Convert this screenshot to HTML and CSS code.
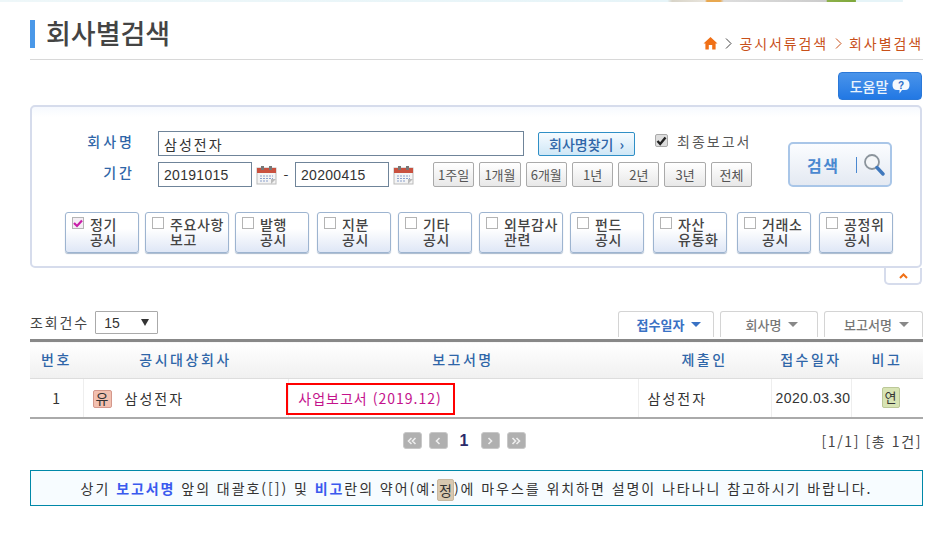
FILE: index.html
```html
<!DOCTYPE html>
<html lang="ko">
<head>
    <meta charset="UTF-8">
    <meta name="viewport" content="width=device-width, initial-scale=1.0">
    <title>회사별검색</title>
    <link rel="stylesheet" href="styles.css">
</head>
<body>
    <div class="top-strip"></div>

    <div class="wrap">
        <div class="title-row">
            <h1 class="page-title">회사별검색</h1>
            <div class="crumbs">
                <svg class="home-icon" width="15" height="14" viewBox="0 0 15 14"><path d="M7.5 1 L14.5 7.5 L12.6 7.5 L12.6 13.5 L9.2 13.5 L9.2 9 L5.8 9 L5.8 13.5 L2.4 13.5 L2.4 7.5 L0.5 7.5 Z" fill="#f07016"/></svg>
                <svg class="crumb-sep" width="7" height="11" viewBox="0 0 7 11"><path d="M1 0.5 L6 5.5 L1 10.5" fill="none" stroke="#444" stroke-width="1"/></svg>
                <span>공시서류검색</span>
                <svg class="crumb-sep" width="7" height="11" viewBox="0 0 7 11"><path d="M1 0.5 L6 5.5 L1 10.5" fill="none" stroke="#c8501a" stroke-width="1"/></svg>
                <span>회사별검색</span>
            </div>
        </div>

        <div class="help-row">
            <button class="help-btn">도움말
                <svg width="18" height="15" viewBox="0 0 18 15"><path d="M5 0.5 H13 Q17.5 0.5 17.5 6 Q17.5 11 13 11 H10 L7.5 14.5 L7.5 11 H5 Q0.5 11 0.5 6 Q0.5 0.5 5 0.5 Z" fill="#f4f8fd"/><text x="9" y="9.5" text-anchor="middle" class="help-mark">?</text></svg>
            </button>
        </div>

        <div class="search-box">
            <div class="search-top">
                <div class="search-fields">
                    <div class="field-row">
                        <label class="field-label">회사명</label>
                        <input class="text-input company-input" type="text" value="삼성전자">
                        <button class="find-btn">회사명찾기 <span class="find-arrow">›</span></button>
                        <label class="final-check"><span class="check-gray"><svg width="11" height="10" viewBox="0 0 11 10"><path d="M1.5 5 L4.2 8 L9.5 1.5" fill="none" stroke="#222" stroke-width="2.4"/></svg></span>최종보고서</label>
                    </div>
                    <div class="field-row date-row">
                        <label class="field-label">기간</label>
                        <input class="text-input date-input" type="text" value="20191015">
                        <svg class="cal-icon" width="21" height="20" viewBox="0 0 21 20"><rect x="1" y="3" width="19" height="16" fill="#f4f4f4" stroke="#bbb"/><rect x="1" y="3" width="19" height="5" fill="#c9513f"/><rect x="5" y="1" width="3" height="4" fill="#777"/><rect x="13" y="1" width="3" height="4" fill="#777"/><path d="M4 11 H17 M4 13.5 H17 M4 16 H13" stroke="#8aa0cc" stroke-width="1" stroke-dasharray="2 1"/><path d="M20 14 L15 19 L15 14 Z" fill="#bbb"/></svg>
                        <span class="date-dash">-</span>
                        <input class="text-input date-input" type="text" value="20200415">
                        <svg class="cal-icon" width="21" height="20" viewBox="0 0 21 20"><rect x="1" y="3" width="19" height="16" fill="#f4f4f4" stroke="#bbb"/><rect x="1" y="3" width="19" height="5" fill="#c9513f"/><rect x="5" y="1" width="3" height="4" fill="#777"/><rect x="13" y="1" width="3" height="4" fill="#777"/><path d="M4 11 H17 M4 13.5 H17 M4 16 H13" stroke="#8aa0cc" stroke-width="1" stroke-dasharray="2 1"/><path d="M20 14 L15 19 L15 14 Z" fill="#bbb"/></svg>
                        <div class="period-btns">
                            <button class="period-btn">1주일</button>
                            <button class="period-btn">1개월</button>
                            <button class="period-btn">6개월</button>
                            <button class="period-btn">1년</button>
                            <button class="period-btn">2년</button>
                            <button class="period-btn">3년</button>
                            <button class="period-btn">전체</button>
                        </div>
                    </div>
                </div>
                <button class="search-btn">
                    <span class="search-text">검색</span>
                    <span class="search-bar"></span>
                    <svg width="22" height="24" viewBox="0 0 22 24"><circle cx="9" cy="9" r="7" fill="#f4f6f8" stroke="#8b949c" stroke-width="1.8"/><path d="M14 14.5 L20 21" stroke="#3f78bd" stroke-width="3.4" stroke-linecap="round"/></svg>
                </button>
            </div>

            <div class="type-grid">
                <label class="type-btn"><span class="type-check on"><svg width="10" height="9" viewBox="0 0 10 9"><path d="M1 4 L4 7 L9 1.5" fill="none" stroke="#c81ea8" stroke-width="2.2"/></svg></span><span class="type-text">정기<br>공시</span></label>
                <label class="type-btn big"><span class="type-check"></span><span class="type-text">주요사항<br>보고</span></label>
                <label class="type-btn"><span class="type-check"></span><span class="type-text">발행<br>공시</span></label>
                <label class="type-btn"><span class="type-check"></span><span class="type-text">지분<br>공시</span></label>
                <label class="type-btn"><span class="type-check"></span><span class="type-text">기타<br>공시</span></label>
                <label class="type-btn big"><span class="type-check"></span><span class="type-text">외부감사<br>관련</span></label>
                <label class="type-btn"><span class="type-check"></span><span class="type-text">펀드<br>공시</span></label>
                <label class="type-btn"><span class="type-check"></span><span class="type-text">자산<br>유동화</span></label>
                <label class="type-btn"><span class="type-check"></span><span class="type-text">거래소<br>공시</span></label>
                <label class="type-btn"><span class="type-check"></span><span class="type-text">공정위<br>공시</span></label>
            </div>
        </div>

        <div class="fold-row">
            <button class="fold-btn"><svg width="9" height="6" viewBox="0 0 9 6"><path d="M1 5 L4.5 1.5 L8 5" fill="none" stroke="#f07016" stroke-width="2"/></svg></button>
        </div>

        <div class="list-bar">
            <div class="page-size">
                <span>조회건수</span>
                <div class="fake-select"><span>15</span><i class="select-arrow"></i></div>
            </div>
            <div class="sort-tabs">
                <a class="sort-tab active">접수일자<i></i></a>
                <a class="sort-tab">회사명<i></i></a>
                <a class="sort-tab">보고서명<i></i></a>
            </div>
        </div>

        <table class="result-table">
            <colgroup>
                <col class="col-no"><col class="col-company"><col class="col-report"><col class="col-filer"><col class="col-date"><col class="col-note">
            </colgroup>
            <thead>
                <tr><th>번호</th><th>공시대상회사</th><th>보고서명</th><th>제출인</th><th>접수일자</th><th>비고</th></tr>
            </thead>
            <tbody>
                <tr>
                    <td class="center">1</td>
                    <td class="company-cell"><span class="market-tag">유</span>삼성전자</td>
                    <td class="report-cell"><a class="report-link">사업보고서 (2019.12)</a></td>
                    <td class="filer-cell">삼성전자</td>
                    <td class="date-cell">2020.03.30</td>
                    <td class="note-cell"><span class="note-tag">연</span></td>
                </tr>
            </tbody>
        </table>

        <div class="pager-row">
            <div class="pager">
                <a class="page-btn"><svg width="10" height="8" viewBox="0 0 10 8"><path d="M4.5 1 L1.5 4 L4.5 7 M8.5 1 L5.5 4 L8.5 7" fill="none" stroke="#eee" stroke-width="1.6"/></svg></a>
                <a class="page-btn"><svg width="6" height="8" viewBox="0 0 6 8"><path d="M4.5 1 L1.5 4 L4.5 7" fill="none" stroke="#eee" stroke-width="1.6"/></svg></a>
                <strong class="page-num">1</strong>
                <a class="page-btn"><svg width="6" height="8" viewBox="0 0 6 8"><path d="M1.5 1 L4.5 4 L1.5 7" fill="none" stroke="#eee" stroke-width="1.6"/></svg></a>
                <a class="page-btn"><svg width="10" height="8" viewBox="0 0 10 8"><path d="M1.5 1 L4.5 4 L1.5 7 M5.5 1 L8.5 4 L5.5 7" fill="none" stroke="#eee" stroke-width="1.6"/></svg></a>
            </div>
            <div class="page-info">[1/1] [총 1건]</div>
        </div>

        <div class="notice">상기 <b>보고서명</b> 앞의 대괄호([]) 및 <b>비고</b>란의 약어(예:<span class="notice-tag">정</span>)에 마우스를 위치하면 설명이 나타나니 참고하시기 바랍니다.</div>
    </div>
</body>
</html>
```

FILE: styles.css
```css
* {
    margin: 0;
    padding: 0;
    box-sizing: border-box;
}
body {
    font-family: "Noto Sans CJK KR", "Liberation Sans", sans-serif;
    font-size: 14px;
    color: #333;
    background: #fff;
}
button {
    font-family: inherit;
    cursor: pointer;
}

.top-strip {
    height: 2px;
    background: linear-gradient(90deg, #eef7f9 0%, #e6f4f8 71%, #d8d4c8 71.5%, #e8e4dc 75%, #e8a850 75.2%, #e8a850 76.6%, #ddd 77%, #ccc 87.9%, #8db04a 88%, #7fa83c 91%, #e6f4f8 91.1%, #e6f4f8 96%, #fff 96.1%);
}
.wrap {
    width: 893px;
    margin-left: 30px;
}

/* title */
.title-row {
    height: 58px;
    display: flex;
    justify-content: space-between;
    align-items: flex-end;
    border-bottom: 1px solid #d8d8d8;
}
.page-title {
    height: 28px;
    margin-bottom: 11px;
    padding-left: 11px;
    border-left: 5px solid #4a98e8;
    font-size: 27px;
    line-height: 26px;
    font-weight: 500;
    color: #444;
    white-space: nowrap;
}
.crumbs {
    display: flex;
    align-items: center;
    gap: 7px;
    margin-bottom: 7px;
    font-size: 14px;
    line-height: 18px;
    letter-spacing: 1.9px;
    color: #c8501a;
}

/* help */
.help-row {
    display: flex;
    justify-content: flex-end;
    padding: 12px 1px 5px 0;
}
.help-btn {
    width: 84px;
    height: 28px;
    display: flex;
    align-items: center;
    justify-content: center;
    gap: 4px;
    border: 1px solid #2a78d8;
    border-radius: 4px;
    background: linear-gradient(#4a94ea, #2278e4);
    color: #eaf3fc;
    font-size: 14px;
    font-weight: 500;
}
.help-mark {
    font-family: "Liberation Sans", sans-serif;
    font-size: 10px;
    font-weight: bold;
    fill: #2a6cc8;
}

/* search box */
.search-box {
    width: 892px;
    height: 163px;
    padding: 24px 0 0 33px;
    border: 2px solid #d6dcec;
    border-radius: 5px;
    background: linear-gradient(#f6f9fe, #fff 10px);
}
.search-top {
    display: flex;
    align-items: flex-end;
}
.search-fields {
    width: 723px;
}
.field-row {
    display: flex;
    align-items: center;
    height: 25px;
}
.date-row {
    margin-top: 6px;
}
.field-label {
    width: 70px;
    margin-right: 23px;
    padding-bottom: 6px;
    text-align: right;
    font-size: 14px;
    font-weight: 500;
    letter-spacing: 3px;
    color: #2f66a8;
}
.text-input {
    height: 25px;
    padding: 0 5px;
    border: 1px solid #6f8499;
    font-family: inherit;
    font-size: 14px;
    color: #333;
}
.company-input {
    width: 366px;
    letter-spacing: 2px;
}
.date-input {
    width: 94px;
    font-family: "Liberation Sans", sans-serif;
    letter-spacing: 0.3px;
}
.cal-icon {
    margin-left: 4px;
    flex: none;
}
.date-dash {
    width: 18px;
    text-align: center;
    font-size: 14px;
}
.find-btn {
    width: 97px;
    height: 24px;
    margin-left: 14px;
    border: 1px solid #2f8fc6;
    border-radius: 2px;
    background: linear-gradient(#f6fbff, #cfe7f6);
    color: #2f66a8;
    font-size: 14px;
    font-weight: 500;
    white-space: nowrap;
}
.find-arrow {
    font-weight: bold;
    margin-left: 2px;
}
.final-check {
    display: flex;
    align-items: center;
    gap: 9px;
    margin-left: 20px;
    padding-bottom: 6px;
    font-size: 14px;
    letter-spacing: 2px;
    color: #555;
    white-space: nowrap;
}
.check-gray {
    width: 13px;
    height: 13px;
    display: flex;
    align-items: center;
    justify-content: center;
    border-radius: 2px;
    border: 1px solid #aaa;
    background: #ddd;
}
.period-btns {
    display: flex;
    gap: 5px;
    margin-left: 19px;
}
.period-btn {
    width: 41.3px;
    height: 25px;
    border: 1px solid #aaa;
    border-radius: 2px;
    background: linear-gradient(#fff, #e8e8e8);
    color: #555;
    font-size: 13px;
    white-space: nowrap;
}
.search-btn {
    width: 104px;
    height: 45px;
    display: flex;
    align-items: center;
    padding-left: 17px;
    border: 2px solid #a9c6e8;
    border-radius: 5px;
    background: linear-gradient(#fbfdff, #e4e9f2);
}
.search-text {
    font-size: 16px;
    font-weight: 700;
    letter-spacing: 1.5px;
    color: #4a88d0;
}
.search-bar {
    width: 1px;
    height: 16px;
    margin: 0 6px 0 17px;
    background: #4a88d0;
}

/* report type buttons */
.type-grid {
    display: grid;
    grid-template-columns: 80px 90px 82px 81px 81px 91px 83px 84px 82px 74px;
    margin-top: 25px;
}
.type-btn {
    width: 74px;
    height: 41px;
    display: flex;
    padding: 4px 0 0 6px;
    border: 1px solid #9db4d0;
    border-radius: 3px;
    background: linear-gradient(#fff 40%, #dfe7f6);
    box-shadow: 0 1px 1px #a8b8cc;
}
.type-btn.big {
    width: 84px;
}
.type-check {
    width: 12px;
    height: 12px;
    flex: none;
    display: flex;
    align-items: center;
    justify-content: center;
    border: 1px solid #b4b4b4;
    background: #fff;
}
.type-check.on {
    background: #f4eef4;
}
.type-text {
    margin-left: 6px;
    font-size: 14px;
    line-height: 15px;
    letter-spacing: 0.6px;
    font-weight: 500;
    color: #444;
    white-space: nowrap;
}

.fold-row {
    display: flex;
    justify-content: flex-end;
    padding-right: 1px;
}
.fold-btn {
    width: 38px;
    height: 17px;
    display: flex;
    align-items: center;
    justify-content: center;
    border: 2px solid #d6dcec;
    border-top: none;
    border-radius: 0 0 5px 5px;
    background: #fff;
}

/* list toolbar */
.list-bar {
    display: flex;
    justify-content: space-between;
    margin-top: 26px;
    height: 28px;
}
.page-size {
    display: flex;
    align-items: flex-start;
    gap: 6px;
    font-size: 14px;
    line-height: 22px;
    letter-spacing: 1.9px;
    color: #444;
}
.fake-select {
    width: 63px;
    height: 23px;
    display: flex;
    align-items: center;
    justify-content: space-between;
    padding: 0 8px;
    border: 1px solid #aaa;
    border-radius: 1px;
    font-family: "Liberation Sans", sans-serif;
    font-size: 14px;
    letter-spacing: 0;
    color: #333;
}
.select-arrow {
    width: 0;
    height: 0;
    border-left: 4px solid transparent;
    border-right: 4px solid transparent;
    border-top: 7px solid #333;
}
.sort-tabs {
    display: flex;
    gap: 6px;
}
.sort-tab {
    height: 26px;
    width: 98px;
    display: flex;
    align-items: center;
    justify-content: center;
    gap: 7px;
    padding-left: 6px;
    border: 1px solid #d4d4d4;
    border-bottom: none;
    border-radius: 3px 3px 0 0;
    font-size: 13px;
    font-weight: 500;
    color: #777;
}
.sort-tab.active {
    width: 96px;
    font-weight: 700;
    color: #3a72c4;
}
.sort-tab:last-child {
    width: 99px;
}
.sort-tab i {
    width: 0;
    height: 0;
    border-left: 5px solid transparent;
    border-right: 5px solid transparent;
    border-top: 5px solid #888;
}
.sort-tab.active i {
    border-top-color: #3a72c4;
}

/* table */
.result-table {
    width: 893px;
    border-collapse: collapse;
    table-layout: fixed;
    border-top: 3px solid #888;
    border-bottom: 2px solid #aaa;
}
.col-no { width: 53px; }
.col-company { width: 205px; }
.col-report { width: 350px; }
.col-filer { width: 133px; }
.col-date { width: 80px; }
.col-note { width: 72px; }
.result-table th {
    height: 38px;
    padding-bottom: 2px;
    border-bottom: 1px solid #ddd;
    background: linear-gradient(#fff, #f0f0f0);
    font-size: 14px;
    font-weight: 500;
    letter-spacing: 2.5px;
    color: #2f66a8;
}
.result-table td {
    height: 39px;
    border-left: 1px solid #eee;
    font-size: 14px;
    color: #333;
}
.result-table td:first-child {
    border-left: none;
}
.center {
    text-align: center;
}
.company-cell {
    padding-left: 9px;
    letter-spacing: 2px;
}
.filer-cell {
    padding-left: 9px;
    letter-spacing: 2px;
}
.market-tag {
    display: inline-block;
    width: 19px;
    height: 18px;
    margin-right: 13px;
    border: 1px solid #d4988c;
    border-radius: 2px;
    background: #f2c0b0;
    text-align: center;
    font-size: 14px;
    line-height: 15px;
    letter-spacing: 0;
    color: #333;
}
.report-cell {
    white-space: nowrap;
}
.report-link {
    display: inline-block;
    width: 169px;
    height: 32px;
    margin-top: 2px;
    margin-left: -3px;
    border: 2px solid #f00;
    text-align: center;
    font-size: 14px;
    line-height: 26px;
    letter-spacing: 1px;
    color: #c4128c;
    vertical-align: middle;
}
.date-cell {
    padding-left: 4px;
    font-family: "Liberation Sans", sans-serif;
    white-space: nowrap;
    letter-spacing: 0.5px;
}
.note-cell {
    padding-left: 30px;
}
.note-tag {
    display: block;
    width: 18px;
    height: 21px;
    border: 1px solid #bcc898;
    border-radius: 2px;
    background: #d8e4b4;
    text-align: center;
    font-size: 13px;
    line-height: 17px;
    color: #333;
}

/* pager */
.pager-row {
    position: relative;
    display: flex;
    justify-content: center;
    align-items: center;
    height: 18px;
    margin-top: 13px;
}
.pager {
    display: flex;
    align-items: center;
    gap: 7px;
    margin-left: -25px;
}
.page-btn {
    width: 19px;
    height: 17px;
    display: flex;
    align-items: center;
    justify-content: center;
    border-radius: 3px;
    border: 1px solid #c8c8c8;
    background: #b0b0b0;
}
.page-num {
    width: 19px;
    text-align: center;
    font-family: "Liberation Sans", sans-serif;
    font-size: 16px;
    color: #2a2a6a;
}
.page-info {
    position: absolute;
    right: 1px;
    top: 0;
    font-size: 14px;
    line-height: 18px;
    letter-spacing: 1.6px;
    color: #444;
}

/* notice */
.notice {
    height: 36px;
    margin-top: 20px;
    border: 1px solid #0088a8;
    background: #f7fcff;
    text-align: center;
    font-size: 14px;
    line-height: 34px;
    letter-spacing: 1.95px;
    color: #333;
    white-space: nowrap;
}
.notice b {
    color: #3a5aee;
}
.notice-tag {
    display: inline-block;
    width: 17px;
    height: 22px;
    line-height: 20px;
    letter-spacing: 0;
    border-radius: 2px;
    background: #d8c8b0;
    border: 1px solid #c8b8a0;
    vertical-align: middle;
}
```
